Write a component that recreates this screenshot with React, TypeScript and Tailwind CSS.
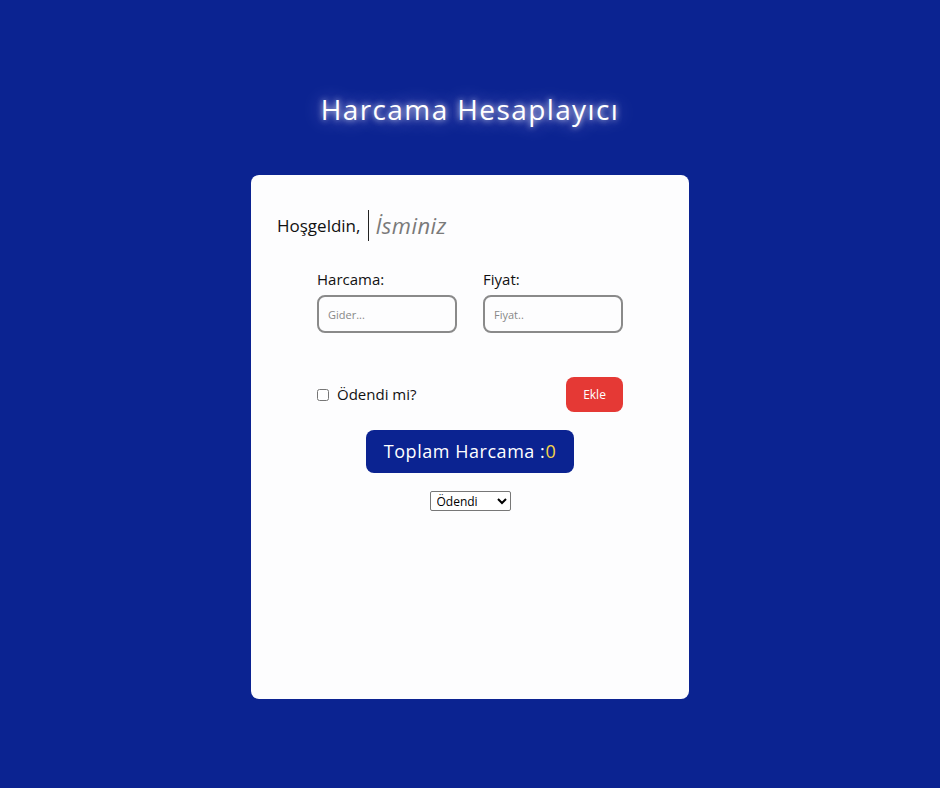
import React from 'react';

export default function App() {
  const font = { fontFamily: '"Open Sans", "DejaVu Sans", sans-serif' };
  return (
    <div className="min-h-screen w-full bg-[#0b2391] flex flex-col items-center" style={font}>
      <h1 className="mt-[91px] h-[36px] text-[28px] leading-[36px] tracking-[0.05em] text-white font-medium [text-shadow:0_0_6px_rgba(255,255,255,0.9),0_0_20px_rgba(200,180,255,0.75)]">
        Harcama Hesaplayıcı
      </h1>

      <div className="mt-[48px] w-[438px] h-[524px] bg-[#fdfdfe] rounded-[8px] flex flex-col">
        <div className="flex items-center pl-[26px] pt-[35px]">
          <span className="text-[17px] text-[#111] font-medium">Hoşgeldin,</span>
          <input
            placeholder="İsminiz"
            className="ml-[8px] h-[31px] w-[150px] border-l border-[#222] pl-[6px] text-[22px] italic tracking-[0.02em] placeholder:text-[#7a7a7a] outline-none bg-transparent"
          />
        </div>

        <div className="flex gap-[26px] pl-[66px] mt-[28px]">
          <div className="flex flex-col">
            <label className="text-[15px] font-medium text-[#111] leading-[20px]">Harcama:</label>
            <input
              placeholder="Gider..."
              className="mt-[6px] w-[140px] h-[38px] border-2 border-[#8a8a8a] rounded-[8px] px-[9px] text-[11px] placeholder:text-[#888] outline-none"
            />
          </div>
          <div className="flex flex-col">
            <label className="text-[15px] font-medium text-[#111] leading-[20px]">Fiyat:</label>
            <input
              placeholder="Fiyat.."
              className="mt-[6px] w-[140px] h-[38px] border-2 border-[#8a8a8a] rounded-[8px] px-[9px] text-[11px] placeholder:text-[#888] outline-none"
            />
          </div>
        </div>

        <div className="flex items-center justify-between pl-[66px] pr-[66px] mt-[44px]">
          <label className="flex items-center gap-[8px] text-[15px] text-[#111]">
            <input type="checkbox" className="w-[12px] h-[12px]" />
            Ödendi mi?
          </label>
          <button className="w-[57px] h-[35px] bg-[#e53935] rounded-[8px] text-white text-[12px]">Ekle</button>
        </div>

        <div className="flex justify-center mt-[18px]">
          <button className="w-[208px] h-[43px] bg-[#0b2391] rounded-[8px] text-white text-[18px] tracking-[0.03em]">
            Toplam Harcama :<span className="text-[#f5d547]">0</span>
          </button>
        </div>

        <div className="flex justify-center mt-[18px]">
          <select className="w-[81px] h-[20px] border border-[#777] rounded-[2px] text-[12px] text-black bg-white px-[2px]">
            <option>Ödendi</option>
            <option>Ödenmedi</option>
          </select>
        </div>
      </div>
    </div>
  );
}
